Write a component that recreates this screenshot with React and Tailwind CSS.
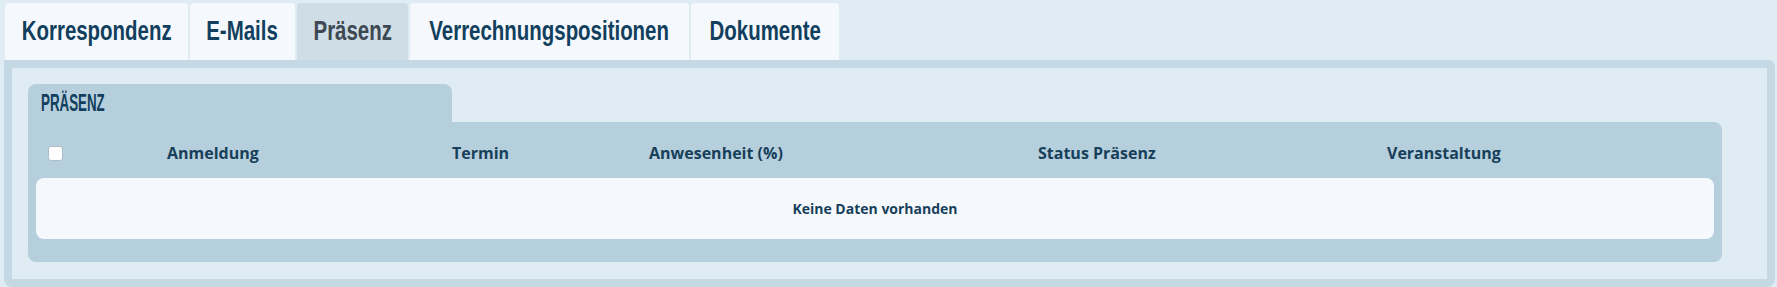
import React from 'react';

const TABS = [
  { label: 'Korrespondenz', width: 'w-[183px]' },
  { label: 'E-Mails', width: 'w-[105px]' },
  { label: 'Präsenz', width: 'w-[111px]', active: true },
  { label: 'Verrechnungspositionen', width: 'w-[279px]' },
  { label: 'Dokumente', width: 'w-[148px]' },
];

const COLUMNS = ['Anmeldung', 'Termin', 'Anwesenheit (%)', 'Status Präsenz', 'Veranstaltung'];

// kein schmaler Font installiert -> Liberation Sans horizontal gestaucht
const condensed = { fontFamily: '"Liberation Sans", Arial, sans-serif' };

export default function App() {
  return (
    <div className="w-full h-[287px] bg-[#dfecf4] flex flex-col" style={{ fontFamily: '"Open Sans", "Liberation Sans", sans-serif' }}>
      {/* Tabs */}
      <div className="flex gap-[2px] pl-[5px] pt-[3px]">
        {TABS.map((tab) => (
          <div
            key={tab.label}
            className={`${tab.width} h-[57px] rounded-t-[4px] flex items-center justify-center pb-[2px] ${
              tab.active ? 'bg-[#cfdde7] text-[#3d4852]' : 'bg-[#f5f9fd] text-[#123f5d]'
            }`}
          >
            <span className="inline-block whitespace-nowrap text-[28px] font-bold scale-x-[0.73]" style={condensed}>
              {tab.label}
            </span>
          </div>
        ))}
      </div>

      {/* Panel */}
      <div className="ml-[4px] mr-[2px] h-[227px] border-[8px] border-[#c5d9e5] rounded-b-[8px] rounded-tr-[6px] bg-[#dfecf4] pt-[16px] pl-[16px] pr-[45px]">
        <div className="flex flex-col">
          <div className="w-[424px] h-[38px] bg-[#b6cfdc] rounded-t-[8px] flex items-center pl-[13px]">
            <span className="inline-block origin-left whitespace-nowrap text-[23px] font-bold scale-x-[0.58] text-[#123f5d]" style={condensed}>
              PRÄSENZ
            </span>
          </div>
          <div className="bg-[#b6cfdc] rounded-b-[8px] rounded-tr-[8px] px-[8px] pb-[23px]">
            <div className="h-[56px] pt-[6px] pl-[12px] grid grid-cols-[119px_285px_197px_389px_349px_1fr] items-center text-[16px] font-bold text-[#173f5a]">
              <div className="flex items-center">
                <input
                  type="checkbox"
                  className="appearance-none w-[15px] h-[15px] bg-white rounded-[3px] border border-[#aebfcb]"
                />
              </div>
              {COLUMNS.map((c) => (
                <div key={c}>{c}</div>
              ))}
            </div>
            <div className="h-[61px] bg-[#f5f9fd] rounded-[8px] flex items-center justify-center text-[14px] font-bold text-[#173f5a]">
              Keine Daten vorhanden
            </div>
          </div>
        </div>
      </div>
    </div>
  );
}
